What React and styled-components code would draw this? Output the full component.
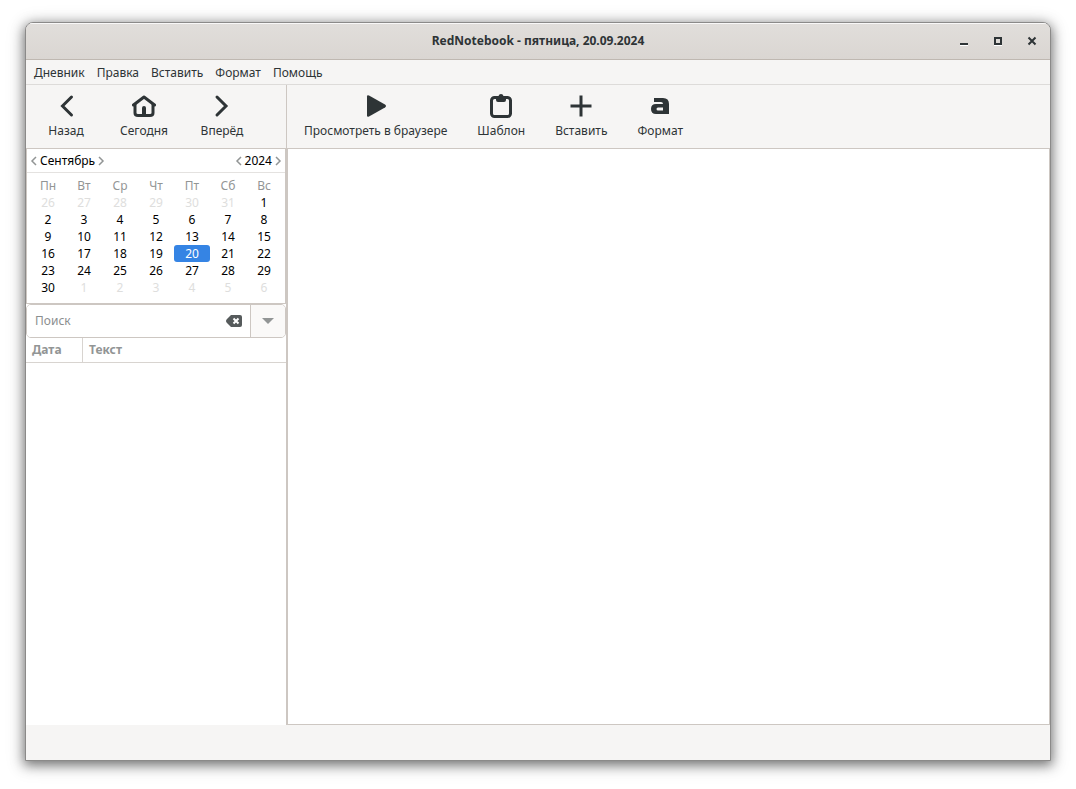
import React from 'react';
import styled, { createGlobalStyle, css } from 'styled-components';

const GlobalStyle = createGlobalStyle`
  *, *::before, *::after { box-sizing: border-box; }
  body {
    margin: 0;
    background: #fff;
    color: #2e3436;
    font-family: "Noto Sans", "Open Sans", sans-serif;
    font-size: 12px;
    line-height: 16px;
  }
  button, input { font: inherit; color: inherit; }
  button { border: 0; margin: 0; padding: 0; background: none; cursor: pointer; }
`;

const edge = '#cdc7c2';

const Window = styled.main`
  display: flex;
  flex-direction: column;
  min-height: calc(100vh - 50px);
  margin: 22px 25px 28px;
  border: 1px solid #8b8a89;
  border-radius: 8px 8px 0 0;
  background: #f6f5f4;
  overflow: hidden;
  box-shadow: 0 3px 12px 1px rgba(0, 0, 0, 0.5), 0 3px 18px 4px rgba(0, 0, 0, 0.1);
`;

const TitleBar = styled.header`
  display: grid;
  grid-template-columns: 1fr auto 1fr;
  align-items: center;
  height: 37px;
  background: linear-gradient(#e1dedb, #dad6d2);
  border-bottom: 1px solid #bfb8b1;
  box-shadow: inset 0 1px #f9f8f8;
`;

const Title = styled.h1`
  grid-column: 2;
  margin: 0;
  font-size: 12px;
  line-height: 16px;
  font-weight: 700;
`;

const WindowControls = styled.div`
  display: flex;
  justify-content: flex-end;
  gap: 10px;
  padding-right: 6px;
`;

const ControlButton = styled.button`
  display: grid;
  place-items: center;
  width: 24px;
  height: 24px;
`;

const MenuBar = styled.nav`
  display: flex;
  height: 25px;
  padding-left: 2px;
  border-bottom: 1px solid #dddbd9;
`;

const MenuItem = styled.button`
  padding: 2px 6px 0;
`;

const Toolbars = styled.div`
  display: flex;
  height: 64px;
  border-bottom: 1px solid ${edge};
`;

const Toolbar = styled.div`
  display: flex;
  ${(p) =>
    p.$side
      ? css`
          width: 261px;
          padding-left: 1px;
          border-right: 1px solid ${edge};
          button { width: 78px; }
        `
      : css`
          flex: 1;
          padding-left: 2px;
        `}
`;

const ToolButton = styled.button`
  display: flex;
  flex-direction: column;
  align-items: center;
  gap: 5px;
  padding: 9px 15px 0;
`;

const Body = styled.div`
  display: flex;
  flex: 1;
`;

const SidePanel = styled.aside`
  display: flex;
  flex-direction: column;
  width: 260px;
  background: #fff;
`;

const Calendar = styled.section`
  height: 155px;
  border: 1px solid ${edge};
  border-top: 0;
  color: #000;
`;

const CalendarHeader = styled.div`
  display: flex;
  justify-content: space-between;
  height: 24px;
  padding: 0 1px;
  border-bottom: 1px solid #e4e2e0;
`;

const Stepper = styled.div`
  display: flex;
  align-items: center;
`;

const StepButton = styled.button`
  display: grid;
  place-items: center;
  width: 12px;
  height: 20px;
  color: #929595;
`;

const Days = styled.table`
  margin: 4px 0 0 3px;
  border-collapse: collapse;
  table-layout: fixed;
  width: 252px;

  th, td {
    height: 17px;
    padding: 0;
    text-align: center;
    line-height: 17px;
  }
  th { font-weight: 400; color: #929595; }
`;

const Day = styled.td`
  color: ${(p) => (p.$selected ? '#fff' : p.$outside ? '#dededd' : '#000')};
  background: ${(p) => (p.$selected ? '#3584e4' : 'none')};
  border-radius: 3px;
`;

const SearchRow = styled.form`
  display: flex;
  height: 34px;
  border: 1px solid ${edge};
  border-radius: 5px;
  overflow: hidden;
`;

const SearchInput = styled.input`
  flex: 1;
  min-width: 0;
  padding: 0 8px;
  border: 0;
  outline: 0;
  background: #fff;
  &::placeholder { color: #8b8e8f; opacity: 1; }
`;

const ClearButton = styled.button`
  display: grid;
  place-items: center;
  width: 32px;
`;

const HistoryButton = styled.button`
  display: grid;
  place-items: center;
  width: 35px;
  border-left: 1px solid ${edge};
  background: #faf9f8;
`;

const Results = styled.table`
  width: 100%;
  border-spacing: 0;
  table-layout: fixed;

  th {
    height: 25px;
    padding: 0 6px;
    border-bottom: 1px solid #d8d4d0;
    text-align: left;
    font-weight: 700;
    color: #929595;
  }
  th:first-child {
    width: 57px;
    border-right: 1px solid #d8d4d0;
  }
`;

const Editor = styled.section`
  flex: 1;
  background: #fff;
  border: 1px solid ${edge};
  border-width: 0 1px 1px 2px;
`;

const StatusBar = styled.footer`
  height: 35px;
`;

const Icon = ({ size = 24, children }) => (
  <svg width={size} height={size} viewBox={`0 0 ${size} ${size}`} fill="none" aria-hidden="true">
    {children}
  </svg>
);

const line = { stroke: '#2e3436', strokeWidth: 3, strokeLinecap: 'round', strokeLinejoin: 'round' };

const icons = {
  back: <path d="M17.500 3 8.500 12l9 9" {...line} strokeLinejoin="miter" />,
  forward: <path d="M7 3l9 9-9 9" {...line} strokeLinejoin="miter" />,
  home: (
    <>
      <path d="M1.500 11 12 3l10.500 8" {...line} />
      <path d="M3 10.500v8.500Q3 21.500 6 21.500h12q3 0 3-2.500V10.500" {...line} />
      <path d="M10 21v-7q0-2 2-2t2 2v7z" fill="#2e3436" />
    </>
  ),
  play: <path d="M3 2.500Q3 .5 5 1.500L21 10.500q2 1.500 0 3L5 22.500q-2 1-2-1z" fill="#2e3436" />,
  clipboard: (
    <>
      <rect x="2.500" y="3.500" width="19" height="19" rx="3" {...line} />
      <path d="M7 2h2.500Q10 0 12 0t2.500 2H17V6q0 2-2 2H9Q7 8 7 6z" fill="#2e3436" />
    </>
  ),
  plus: <path d="M12 1.500v21M1.500 12h21" stroke="#2e3436" strokeWidth="3" />,
  format: (
    <path
      fillRule="evenodd"
      d="M6 4h9q6 0 6 6v10H8q-5 0-5-5t5-5h7q0-2-2-2H6zM15 13.500H10q-1.500 0-1.500 1.500t1.500 1.500h5z"
      fill="#2e3436"
    />
  ),
};

const Chevron = ({ right }) => (
  <Icon size={12}>
    <path d={right ? 'M4 2l4 4-4 4' : 'M8 2 4 6l4 4'} stroke="currentColor" strokeWidth="1.500" />
  </Icon>
);

const menus = ['Дневник', 'Правка', 'Вставить', 'Формат', 'Помощь'];
const sideTools = [['back', 'Назад'], ['home', 'Сегодня'], ['forward', 'Вперёд']];
const mainTools = [
  ['play', 'Просмотреть в браузере'],
  ['clipboard', 'Шаблон'],
  ['plus', 'Вставить'],
  ['format', 'Формат'],
];
const weekdays = ['Пн', 'Вт', 'Ср', 'Чт', 'Пт', 'Сб', 'Вс'];

const selectedDay = 20;
const weeks = Array.from({ length: 6 }, (_, w) =>
  Array.from({ length: 7 }, (_, d) => {
    const n = w * 7 + d - 5;
    if (n < 1) return { n: n + 31, outside: true };
    if (n > 30) return { n: n - 30, outside: true };
    return { n, outside: false };
  }),
);

const Tools = ({ items }) =>
  items.map(([icon, label]) => (
    <ToolButton key={icon} type="button">
      <Icon>{icons[icon]}</Icon>
      {label}
    </ToolButton>
  ));

export default function App() {
  return (
    <>
      <GlobalStyle />
      <Window>
        <TitleBar>
          <Title>RedNotebook - пятница, 20.09.2024</Title>
          <WindowControls>
            <ControlButton type="button" aria-label="Свернуть">
              <Icon size={16}><path d="M4 10h8v2H4z" fill="#2e3436" /><path d="M4 12h8v1H4z" fill="#fff" /></Icon>
            </ControlButton>
            <ControlButton type="button" aria-label="Развернуть">
              <Icon size={16}><path d="M4 12h8v1H4z" fill="#fff" /><path d="M5 5h6v6H5z" stroke="#2e3436" strokeWidth="2" /></Icon>
            </ControlButton>
            <ControlButton type="button" aria-label="Закрыть">
              <Icon size={16}><path d="m4.500 4.500 7 7m0-7-7 7" stroke="#2e3436" strokeWidth="2" /></Icon>
            </ControlButton>
          </WindowControls>
        </TitleBar>
        <MenuBar>
          {menus.map((m) => <MenuItem key={m} type="button">{m}</MenuItem>)}
        </MenuBar>
        <Toolbars>
          <Toolbar $side><Tools items={sideTools} /></Toolbar>
          <Toolbar><Tools items={mainTools} /></Toolbar>
        </Toolbars>
        <Body>
          <SidePanel>
            <Calendar>
              <CalendarHeader>
                <Stepper>
                  <StepButton type="button" aria-label="Предыдущий месяц"><Chevron /></StepButton>
                  Сентябрь
                  <StepButton type="button" aria-label="Следующий месяц"><Chevron right /></StepButton>
                </Stepper>
                <Stepper>
                  <StepButton type="button" aria-label="Предыдущий год"><Chevron /></StepButton>
                  2024
                  <StepButton type="button" aria-label="Следующий год"><Chevron right /></StepButton>
                </Stepper>
              </CalendarHeader>
              <Days>
                <thead>
                  <tr>{weekdays.map((d) => <th key={d} scope="col">{d}</th>)}</tr>
                </thead>
                <tbody>
                  {weeks.map((week, i) => (
                    <tr key={i}>
                      {week.map(({ n, outside }) => (
                        <Day key={n} $outside={outside} $selected={!outside && n === selectedDay}>{n}</Day>
                      ))}
                    </tr>
                  ))}
                </tbody>
              </Days>
            </Calendar>
            <SearchRow role="search">
              <SearchInput type="text" placeholder="Поиск" aria-label="Поиск" />
              <ClearButton type="button" aria-label="Очистить">
                <Icon size={16}>
                  <path d="M5 2h9q2 0 2 2v8q0 2-2 2H5L1 10q-2-2 0-4z" fill="#565b5c" />
                  <path d="m7.500 5.500 5 5m0-5-5 5" stroke="#fff" strokeWidth="2" />
                </Icon>
              </ClearButton>
              <HistoryButton type="button" aria-label="История поиска">
                <Icon size={12}><path d="M0 3h12L6 9z" fill="#929595" /></Icon>
              </HistoryButton>
            </SearchRow>
            <Results>
              <thead>
                <tr><th scope="col">Дата</th><th scope="col">Текст</th></tr>
              </thead>
            </Results>
          </SidePanel>
          <Editor aria-label="Запись" />
        </Body>
        <StatusBar />
      </Window>
    </>
  );
}
